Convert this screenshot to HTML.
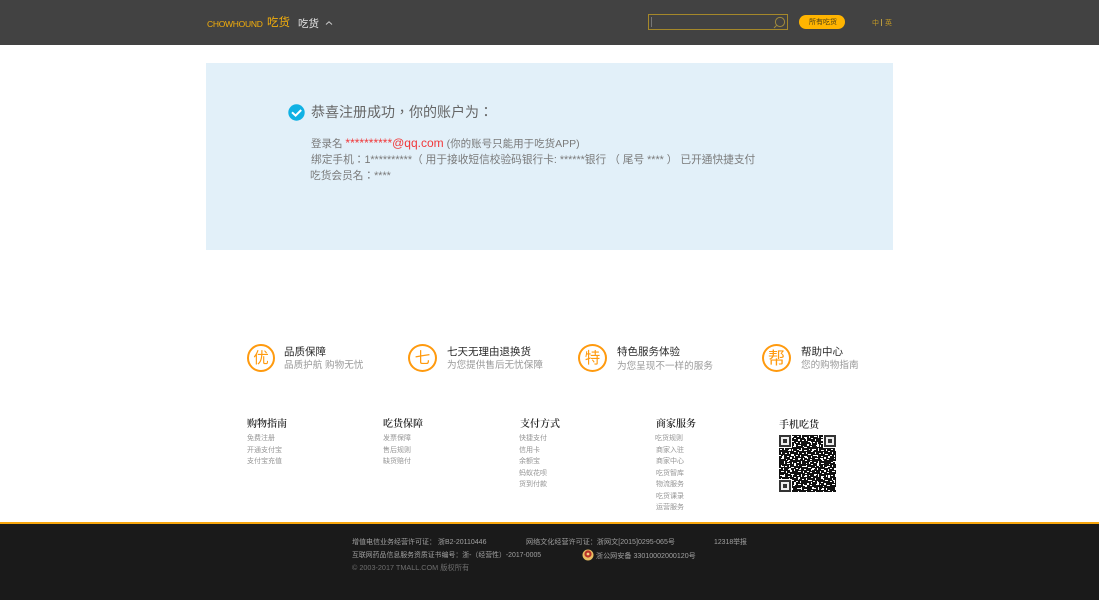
<!DOCTYPE html>
<html lang="zh">
<head>
<meta charset="utf-8">
<title>吃货</title>
<style>
html,body{margin:0;padding:0;background:#fff}
body{width:1099px;height:600px;position:relative;overflow:hidden;font-family:"Liberation Sans","Noto Sans CJK SC",sans-serif}
.t{position:absolute;white-space:nowrap;line-height:1;filter:blur(.3px)}
.b{position:absolute}
.g{color:#959595;font-size:7px}
.h{color:#222;font-size:10px;font-family:"Liberation Serif","Noto Serif CJK SC",serif;font-weight:600}
.c{position:absolute;width:28px;height:28px;border:2px solid #ff9a0e;border-radius:50%;box-sizing:border-box;color:#ff9a0e;font-size:15.5px;line-height:25px;text-align:center}
.s1{color:#2a2a2a;font-size:10.5px;font-weight:400}
.s2{color:#999;font-size:9.6px}
.f{color:#a0a0a0;font-size:7px}
.m{font-family:"Liberation Sans","Noto Sans CJK TC",sans-serif;color:#7a7a7a}
</style>
</head>
<body>
<div class="b" style="left:0;top:0;width:1099px;height:45px;background:#424242"></div>
<div class="t" style="left:207px;top:19.5px;font-size:8.5px;color:#f3ae0c;letter-spacing:-.28px">CHOWHOUND</div>
<div class="t" style="left:267px;top:17px;font-size:11.5px;color:#f3ae0c;font-family:'WenQuanYi Zen Hei','Noto Sans CJK SC',sans-serif">吃货</div>
<div class="t" style="left:298px;top:18.5px;font-size:10.5px;color:#e4e4e4">吃货</div>
<svg class="b" style="left:325px;top:20px" width="8" height="6"><path d="M1 4.5 L4 1.8 L7 4.5" fill="none" stroke="#ccc" stroke-width="1"/></svg>

<div class="b" style="left:648px;top:14px;width:140px;height:16px;border:1px solid #a5882a;box-sizing:border-box"></div>
<div class="b" style="left:651px;top:17px;width:1px;height:10px;background:#777"></div>
<svg class="b" style="left:772px;top:15px" width="16" height="14"><circle cx="8" cy="7" r="4.6" fill="none" stroke="#a08a3c" stroke-width="1"/><path d="M4.5 10.5L2 13" stroke="#a08a3c"/></svg>
<div class="b" style="left:799px;top:15px;width:46px;height:14px;border-radius:7px;background:#ffb400"></div>
<div class="t" style="left:809px;top:19px;font-size:7px;color:#4d3f14">所有吃货</div>
<div class="t" style="left:872px;top:19.5px;font-size:7px;color:#c49a25">中</div>
<div class="b" style="left:881px;top:19px;width:1px;height:7px;background:#b79b48"></div>
<div class="t" style="left:885px;top:19.5px;font-size:7px;color:#c49a25">英</div>

<div class="b" style="left:206px;top:63px;width:687px;height:187px;background:#e2f0f9"></div>
<svg class="b" style="left:288px;top:104px" width="17" height="17"><circle cx="8.5" cy="8.5" r="8.2" fill="#0fb1e4"/><path d="M4 8.3L7.6 11.6L13.2 6" fill="none" stroke="#fff" stroke-width="2"/></svg>
<div class="t m" lang="zh-TW" style="left:311px;top:105px;font-size:14px;color:#666">恭喜注册成功，你的账户为：</div>
<div class="t m" lang="zh-TW" style="left:311px;top:137px;font-size:10.5px">登录名 <span style="color:#f0383a;font-size:12px">**********@qq.com</span> (你的账号只能用于吃货APP)</div>
<div class="t m" lang="zh-TW" style="left:311px;top:155px;font-size:10.7px">绑定手机：1**********（ 用于接收短信校验码银行卡: ******银行 （ 尾号 **** ） 已开通快捷支付</div>
<div class="t m" lang="zh-TW" style="left:310px;top:171px;font-size:10.7px">吃货会员名：****</div>

<div class="c" style="left:247px;top:344px">优</div>
<div class="t s1" style="left:284px;top:347px">品质保障</div>
<div class="t s2" style="left:284px;top:361px">品质护航&nbsp;购物无忧</div>
<div class="c" style="left:408px;top:344px;width:29px">七</div>
<div class="t s1" style="left:447px;top:347px">七天无理由退换货</div>
<div class="t s2" style="left:447px;top:361px">为您提供售后无忧保障</div>
<div class="c" style="left:578px;top:344px;width:29px">特</div>
<div class="t s1" style="left:617px;top:347px">特色服务体验</div>
<div class="t s2" style="left:617px;top:361.5px">为您呈现不一样的服务</div>
<div class="c" style="left:762px;top:344px;width:29px;font-size:17px">帮</div>
<div class="t s1" style="left:801px;top:347px">帮助中心</div>
<div class="t s2" style="left:801px;top:361px">您的购物指南</div>

<div class="t h" style="left:247px;top:420px">购物指南</div>
<div class="t g" style="left:247px;top:435px">免费注册</div>
<div class="t g" style="left:247px;top:446.5px">开通支付宝</div>
<div class="t g" style="left:247px;top:458px">支付宝充值</div>
<div class="t h" style="left:383px;top:420px">吃货保障</div>
<div class="t g" style="left:383px;top:435px">发票保障</div>
<div class="t g" style="left:383px;top:446.5px">售后规则</div>
<div class="t g" style="left:383px;top:458px">缺货赔付</div>
<div class="t h" style="left:520px;top:420px">支付方式</div>
<div class="t g" style="left:519px;top:435px">快捷支付</div>
<div class="t g" style="left:519px;top:446.5px">信用卡</div>
<div class="t g" style="left:519px;top:458px">余额宝</div>
<div class="t g" style="left:519px;top:469.5px">蚂蚁花呗</div>
<div class="t g" style="left:519px;top:481px">货到付款</div>
<div class="t h" style="left:656px;top:420px">商家服务</div>
<div class="t g" style="left:655px;top:435px">吃货规则</div>
<div class="t g" style="left:656px;top:446.5px">商家入驻</div>
<div class="t g" style="left:656px;top:458px">商家中心</div>
<div class="t g" style="left:656px;top:469.5px">吃货智库</div>
<div class="t g" style="left:656px;top:481px">物流服务</div>
<div class="t g" style="left:656px;top:492.5px">吃货课录</div>
<div class="t g" style="left:656px;top:504px">运营服务</div>
<div class="t h" style="left:779px;top:421px">手机吃货</div>

<svg class="b" style="left:779px;top:435px" width="57" height="57" viewBox="0 0 57 57" shape-rendering="crispEdges">
<defs>
<pattern id="n" width="17" height="13" patternUnits="userSpaceOnUse">
<rect width="17" height="13" fill="#111"/>
<path fill="#fff" d="M1 1h2v1H1zM5 0h1v3H5zM8 2h3v1H8zM13 1h1v2h-1zM15 3h2v1h-2zM2 4h1v2H2zM6 5h2v1H6zM10 4h1v2h-1zM12 6h3v1h-3zM0 7h2v1H0zM4 7h1v2H4zM8 8h2v1H8zM15 8h1v2h-1zM2 10h3v1H2zM7 10h1v2H7zM11 9h2v2h-2zM14 11h2v1h-2zM9 12h2v1H9z"/>
</pattern>
<pattern id="o" width="23" height="19" patternUnits="userSpaceOnUse">
<path fill="#fff" d="M3 2h2v2H3zM12 1h3v1h-3zM19 4h2v2h-2zM8 7h2v1H8zM15 9h2v3h-2zM2 12h3v1H2zM10 14h2v2h-2zM20 15h2v1h-2z"/>
<path fill="#111" d="M6 3h3v2H6zM16 5h3v2h-3zM1 8h3v3H1zM11 10h3v2h-3zM18 12h3v2h-3zM5 15h4v2H5zM14 17h3v2h-3z"/>
</pattern>
</defs>
<rect width="57" height="57" fill="url(#n)"/>
<rect width="57" height="57" fill="url(#o)"/>
<path fill="#fff" d="M0 0h13v13H0zM44 0h13v13H44zM0 44h13v13H0z"/>
<path fill="#333" d="M0 0h12v12H0zM45 0h12v12H45zM0 45h12v12H0z"/>
<path fill="#eee" d="M2 2h8v8H2zM47 2h8v8h-8zM2 47h8v8H2z"/>
<path fill="#333" d="M4 4h4v4H4zM49 4h4v4h-4zM4 49h4v4H4z"/>
</svg>

<div class="b" style="left:0;top:522px;width:1099px;height:78px;background:#1a1a1a"></div>
<div class="b" style="left:0;top:522px;width:1099px;height:2px;background:#f7a60d"></div>
<div class="t f" style="left:352px;top:539px">增值电信业务经营许可证： 浙B2-20110446</div>
<div class="t f" style="left:526px;top:538.5px;font-size:7.1px">网络文化经营许可证：浙网文[2015]0295-065号</div>
<div class="t f" style="left:714px;top:539.5px;font-size:6.9px">12318举报</div>
<div class="t f" style="left:352px;top:553px;font-size:6.9px">互联网药品信息服务资质证书编号：浙-（经营性）-2017-0005</div>
<svg class="b" style="left:582px;top:549px" width="12" height="12"><circle cx="6" cy="6" r="5.5" fill="#e8bd62"/><circle cx="6" cy="5" r="3.6" fill="#b8332a"/><circle cx="6" cy="5" r="1.4" fill="#f3d27f"/></svg>
<div class="t f" style="left:596px;top:553px;font-size:7.1px">浙公网安备 33010002000120号</div>
<div class="t f" style="left:352px;top:564px;color:#6e6e6e;font-size:7.25px">© 2003-2017 TMALL.COM 版权所有</div>
</body>
</html>
